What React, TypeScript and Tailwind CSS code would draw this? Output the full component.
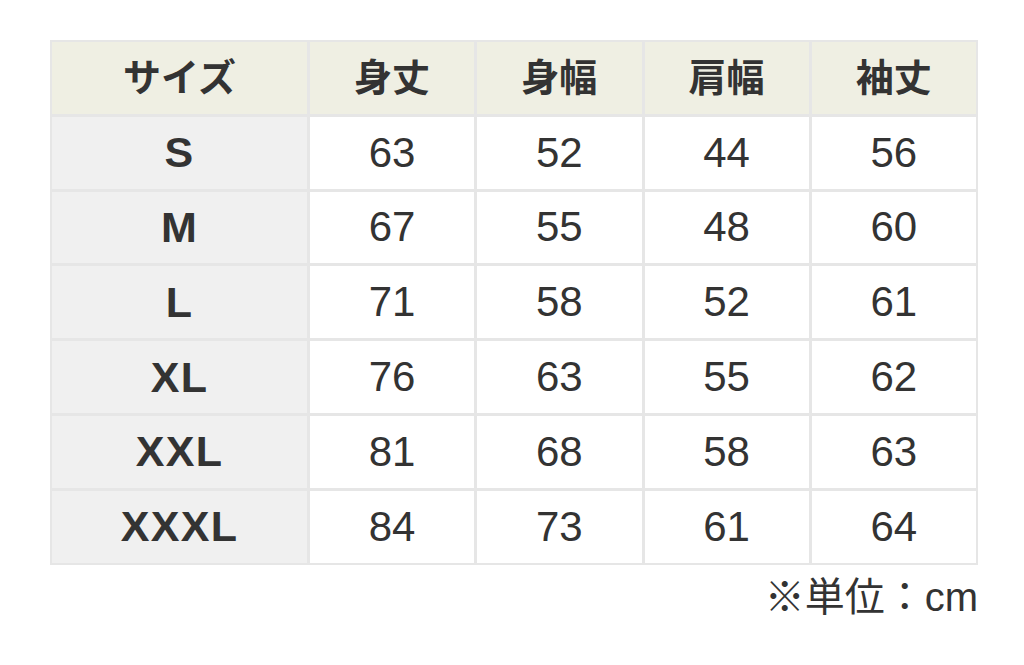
import React from 'react';

const headers = ['サイズ', '身丈', '身幅', '肩幅', '袖丈'];

const rows: [string, number, number, number, number][] = [
  ['S', 63, 52, 44, 56],
  ['M', 67, 55, 48, 60],
  ['L', 71, 58, 52, 61],
  ['XL', 76, 63, 55, 62],
  ['XXL', 81, 68, 58, 63],
  ['XXXL', 84, 73, 61, 64],
];

const font = { fontFamily: '"Liberation Sans", "Noto Sans CJK JP", sans-serif' };

export default function App() {
  return (
    <div className="min-h-[665px] w-[1024px] bg-white text-[#333]" style={font}>
      <div className="pt-[40px] pl-[50px] w-[978px]">
        <div className="grid grid-cols-[255px_repeat(4,1fr)] auto-rows-[71.8px] gap-[3px] p-[2px] bg-[#e6e6e6]">
          {headers.map((h) => (
            <div
              key={h}
              className="flex items-center justify-center bg-[#efefe3] text-[38px] font-bold leading-none"
            >
              {h}
            </div>
          ))}
          {rows.map(([size, ...vals]) => (
            <React.Fragment key={size}>
              <div className="flex items-center justify-center bg-[#f0f0f0] text-[43px] font-bold tracking-[0.03em] leading-none">
                {size}
              </div>
              {vals.map((v, i) => (
                <div
                  key={i}
                  className="flex items-center justify-center bg-white text-[42px] leading-none"
                >
                  {v}
                </div>
              ))}
            </React.Fragment>
          ))}
        </div>
        <div className="flex justify-end pt-[12px] text-[40px] leading-none">
          ※単位：cm
        </div>
      </div>
    </div>
  );
}
